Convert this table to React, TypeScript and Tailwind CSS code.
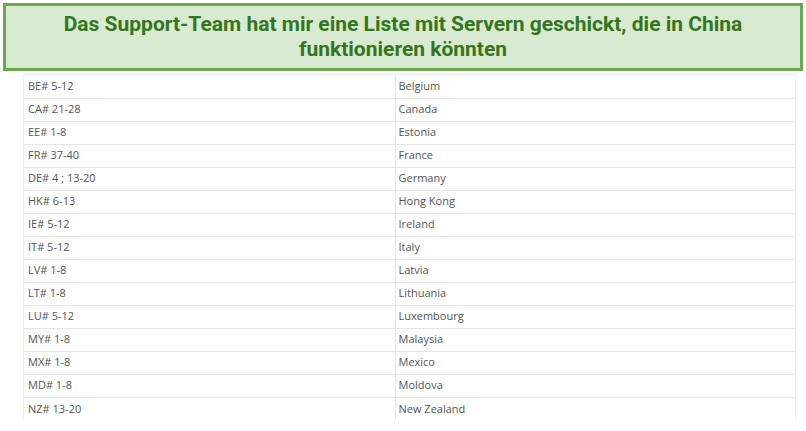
const rows: [string, string][] = [
  ["BE# 5-12", "Belgium"],
  ["CA# 21-28", "Canada"],
  ["EE# 1-8", "Estonia"],
  ["FR# 37-40", "France"],
  ["DE# 4 ; 13-20", "Germany"],
  ["HK# 6-13", "Hong Kong"],
  ["IE# 5-12", "Ireland"],
  ["IT# 5-12", "Italy"],
  ["LV# 1-8", "Latvia"],
  ["LT# 1-8", "Lithuania"],
  ["LU# 5-12", "Luxembourg"],
  ["MY# 1-8", "Malaysia"],
  ["MX# 1-8", "Mexico"],
  ["MD# 1-8", "Moldova"],
  ["NZ# 13-20", "New Zealand"],
];

export default function App() {
  return (
    <div className="w-[806px] h-[431px] overflow-hidden bg-white pt-[3px]">
      <div className="mx-[3px] h-[68px] border-[3px] border-[#6aa84f] bg-[#d9ead3] flex items-center justify-center px-4">
        <h2
          className="text-center text-[21px] leading-[25px] font-bold text-[#34761a]"
          style={{ fontFamily: "Roboto, 'Liberation Sans', sans-serif" }}
        >
          Das Support-Team hat mir eine Liste mit Servern geschickt, die in China
          funktionieren könnten
        </h2>
      </div>
      <div className="mx-[23px] mt-[3px] w-[773px] h-[345px] overflow-hidden border-x border-t border-[#eeeeee]">
        <table
          className="w-full border-collapse text-[11px] text-[#555555]"
          style={{ fontFamily: "'Open Sans', 'DejaVu Sans', sans-serif" }}
        >
          <tbody>
            {rows.map(([code, country], i) => (
              <tr key={code} className={i > 0 ? "border-t border-[#e5e5e5]" : ""}>
                <td className="w-[371px] h-[23px] pl-[4px] border-r border-[#e5e5e5] align-middle">
                  {code}
                </td>
                <td className="h-[23px] pl-[3px] align-middle">{country}</td>
              </tr>
            ))}
          </tbody>
        </table>
      </div>
    </div>
  );
}
